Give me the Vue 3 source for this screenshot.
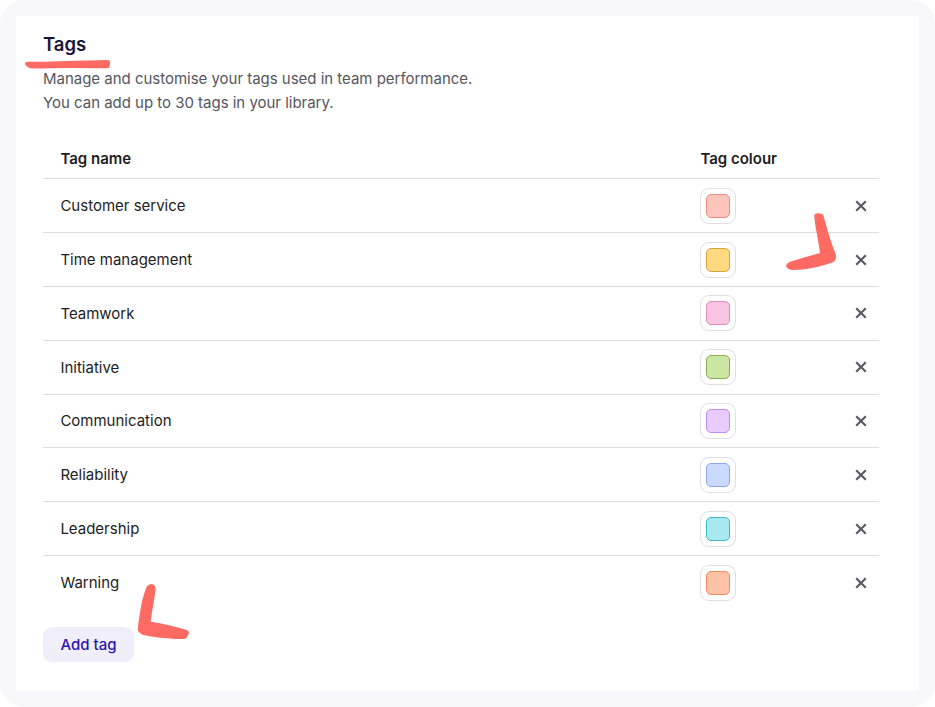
<script setup>
const tags = [
  { name: 'Customer service', fill: '#ffc4bc', edge: '#ee8b7d' },
  { name: 'Time management', fill: '#ffd97f', edge: '#d9a53c' },
  { name: 'Teamwork', fill: '#f9c3e2', edge: '#e58bbd' },
  { name: 'Initiative', fill: '#cbe5a3', edge: '#86b04f' },
  { name: 'Communication', fill: '#e8ccff', edge: '#c08bf5' },
  { name: 'Reliability', fill: '#c9d9ff', edge: '#8ba6ef' },
  { name: 'Leadership', fill: '#a8e8ee', edge: '#3bbcc8' },
  { name: 'Warning', fill: '#ffc2a6', edge: '#f58a5c' },
]
</script>

<template>
  <div class="frame">
    <main class="card">
      <h1 class="title">Tags</h1>
      <p class="desc">Manage and customise your tags used in team performance.<br />You can add up to 30 tags in your library.</p>

      <div class="head row-grid">
        <span>Tag name</span>
        <span>Tag colour</span>
        <span></span>
      </div>
      <div v-for="tag in tags" :key="tag.name" class="row row-grid">
        <span class="name">{{ tag.name }}</span>
        <span class="well">
          <span class="swatch" :style="{ background: tag.fill, borderColor: tag.edge }"></span>
        </span>
        <svg class="close" width="12" height="12" viewBox="0 0 12 12" aria-hidden="true">
          <path d="M1.2 1.2 10.8 10.8M10.8 1.2 1.2 10.8" />
        </svg>
      </div>

      <button class="add" type="button">Add tag</button>
    </main>

    <svg class="marks" width="935" height="707" viewBox="0 0 935 707" aria-hidden="true">
      <path d="M25 63.3C25.5 62 26.5 61.7 28 61.7C42 62 54 61.4 66.7 61C80 60.6 94 60.2 108.3 60C110 61 110.5 62 110 63.3C110 66 109.5 67.5 108.3 68.3C94 68.4 80 67.8 66.7 68C54 68.2 42 68.8 30 68.3C27 67 25 65.5 25 63.3Z" />
      <path d="M814.3 215C815.5 213.5 816.7 213.3 818 213.3C820.5 213.3 822.3 214 823.3 215C825 221 826.5 227 828.3 233C830.5 241 833.5 248 836 255C836 258 835.5 260.5 834 261.7C827 264.5 820 266.5 813 267.7C806 269 800 270 793 270C789.5 270 787 268.5 786 266C786.5 264 788 262.5 790 261.7C800 258.5 810 256 820 253C819 246 818 240 816.7 233C815.5 227 814.5 221 814.3 215Z" />
      <path d="M151.7 584C154 584.3 155.5 586 155.7 588.3C154.5 600 152 610 150.7 621.7C163 623.5 175 626.5 186.7 630C188 630.6 188.8 631.5 189 632.7C188 635.5 186.8 637.8 185 639C178 639.3 172 639 166.7 638.3C158 637.5 150.5 636.5 143.3 635C140.5 633.8 138.5 632 137.7 630C138.5 621 140 612 141.7 603C143 597 144.5 592 146.7 586.7C148 585 149.8 584 151.7 584Z" />
    </svg>
  </div>
</template>

<style>
html, body { margin: 0; background: #fff; }
</style>

<style scoped>
.frame {
  position: relative;
  box-sizing: border-box;
  width: 935px;
  height: 707px;
  padding: 16px;
  background: #f8f8fb;
  border-radius: 24px;
  font-family: Inter, "Liberation Sans", sans-serif;
  overflow: hidden;
}
.card {
  box-sizing: border-box;
  height: 675px;
  padding: 15px 40px 0 27px;
  background: #fff;
}
.title {
  margin: 0;
  font-size: 18.5px;
  line-height: 26px;
  font-weight: 600;
  color: #17143a;
}
.desc {
  margin: 10px 0 0;
  font-size: 15px;
  letter-spacing: -0.02px;
  line-height: 24px;
  color: #565660;
}
.row-grid {
  display: grid;
  grid-template-columns: 640px 1fr 37px;
  align-items: center;
  padding-left: 17.4px;
  box-sizing: border-box;
}
.head {
  margin-top: 25px;
  height: 39.35px;
  padding-bottom: 1px;
  font-size: 15px;
  font-weight: 600;
  color: #1d1d22;
  border-bottom: 1px solid #dcdce4;
}
.row {
  height: 53.8px;
  font-size: 15px;
  color: #1d1d22;
  border-bottom: 1px solid #dcdce4;
}
.row:last-of-type { border-bottom: 0; }
.well {
  box-sizing: border-box;
  width: 36px;
  height: 36px;
  display: flex;
  align-items: center;
  justify-content: center;
  border: 1px solid #dedee6;
  border-radius: 9px;
}
.swatch {
  box-sizing: border-box;
  width: 24px;
  height: 24px;
  border: 1px solid;
  border-radius: 5px;
}
.close { justify-self: center; }
.close path {
  fill: none;
  stroke: #5b5b66;
  stroke-width: 2.2;
}
.add {
  display: block;
  margin-top: 17.1px;
  width: 91px;
  height: 35px;
  padding: 0;
  border: 0;
  border-radius: 9px;
  background: #f0eefa;
  color: #2e15ad;
  font: 500 15px Inter, "Liberation Sans", sans-serif;
}
.marks {
  position: absolute;
  inset: 0;
  pointer-events: none;
}
.marks path { fill: #ff6b63; }
</style>
